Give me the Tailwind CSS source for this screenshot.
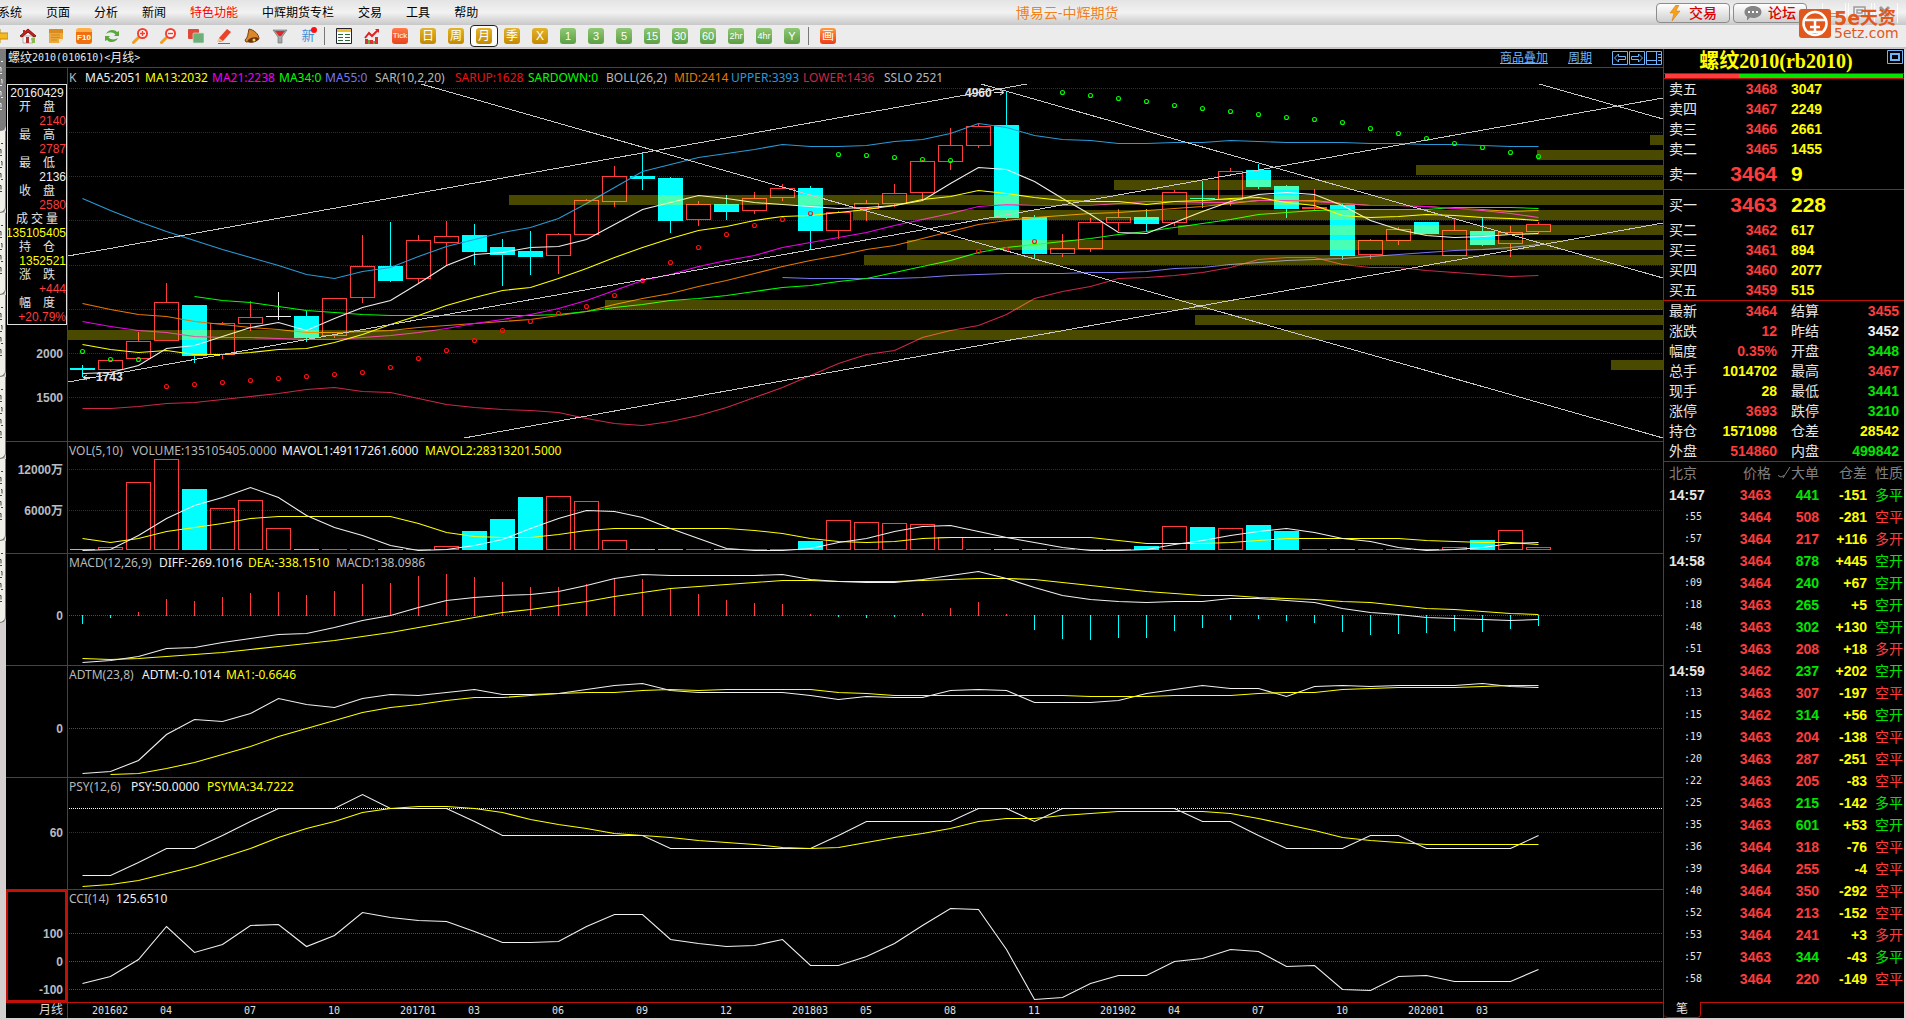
<!DOCTYPE html>
<html lang="zh-CN">
<head>
<meta charset="utf-8">
<title>博易云-中辉期货</title>
<script src="https://cdn.jsdelivr.net/npm/@tailwindcss/browser@4"></script>
</head>
<body class="h-screen min-h-[700px] flex flex-col overflow-hidden bg-[#d4d0cf] font-['Liberation_Sans','Noto_Sans_CJK_SC',sans-serif] text-xs">

<header class="relative shrink-0">
  <div class="h-[25px] flex items-center bg-linear-to-b from-[#e4e4e4] via-[#f2f2f2] to-[#c8c8c8] pr-2">
    <nav class="flex gap-6 -ml-0.5 text-black leading-6 whitespace-nowrap">
      <a href="#">系统</a><a href="#">页面</a><a href="#">分析</a><a href="#">新闻</a><a href="#" class="text-[#ff0000]">特色功能</a><a href="#">中辉期货专栏</a><a href="#">交易</a><a href="#">工具</a><a href="#">帮助</a>
    </nav>
    <h1 class="mx-auto text-sm text-[#f08020] whitespace-nowrap">博易云-中辉期货</h1>
    <div class="flex items-center gap-[3px]">
      <button class="w-[74px] h-5 rounded border border-[#8c8c8c] bg-linear-to-b from-white to-[#cfcfcf] flex items-center justify-center gap-2 text-sm font-medium text-[#d80000]">
        <svg width="12" height="16" viewBox="0 0 12 16"><path d="M7 0 1 8h4l-2 8 8-10H7l3-6z" fill="#f7a21b" stroke="#d07000" stroke-width=".5"/></svg>交易
      </button>
      <button class="w-[74px] h-5 rounded border border-[#8c8c8c] bg-linear-to-b from-white to-[#cfcfcf] flex items-center justify-center gap-1.5 text-sm font-medium text-[#d80000]">
        <svg width="18" height="16" viewBox="0 0 18 16"><path d="M9 1c5 0 8.500 2.500 8.500 6S14 13 9 13c-1 0-2-.1-3-.4L3 15.500V11.500C1.500 10.500.5 9 .5 7.200.5 3.500 4 1 9 1z" fill="#858585"/><path d="M4 7h2M8 7h2M12 7h2" stroke="#fff" stroke-width="1.800"/></svg>论坛
      </button>
      <div class="flex gap-0.5 ml-3 text-[#9a9a9a]">
        <button aria-label="最小化" class="w-6 h-5 border-x border-white/80"><svg width="20" height="16" viewBox="0 0 20 16" fill="none" stroke="currentColor"><path d="M5 8.500h10v3H5z"/></svg></button>
        <button aria-label="还原" class="w-6 h-5 border-x border-white/80"><svg width="20" height="16" viewBox="0 0 20 16" fill="none" stroke="currentColor" stroke-width="1.500"><path d="M5 2h11v9H5zM8 5h5v3H8z"/></svg></button>
        <button aria-label="关闭" class="w-6 h-5 border-x border-white/80"><svg width="20" height="16" viewBox="0 0 20 16" fill="none" stroke="currentColor" stroke-width="3"><path d="m5 2 9 9M14 2l-9 9"/></svg></button>
      </div>
    </div>
  </div>
  <div id="tools" class="h-[22px] flex items-center bg-[#ececec] overflow-hidden"></div>
  <div class="h-0.5 bg-[#c9c5c4]"></div>

  <div class="absolute right-1 top-2 flex items-center gap-[3px] text-[#e2571b]">
    <svg width="32" height="31" viewBox="0 0 32 31"><rect y="1" width="32" height="29" rx="3" fill="#e2571b"/><circle cx="16" cy="15.500" r="11.500" fill="none" stroke="#fff" stroke-width="2.500"/><path d="M6 12h20M11 19h10M8 24h16M16 12v12" stroke="#fff" stroke-width="2.500" fill="none"/></svg>
    <div class="w-[68px] leading-none">
      <div class="text-[19px] leading-[18px] font-bold font-['DejaVu_Sans','Noto_Sans_CJK_SC',sans-serif] whitespace-nowrap flex items-center">5e<span class="text-[18px]">天资</span></div>
      <div class="text-sm leading-3 font-['DejaVu_Sans',sans-serif] whitespace-nowrap">5etz.com</div>
    </div>
  </div>
</header>

<main class="flex-1 min-h-0 flex pr-0.5 pb-0.5">
  <aside class="w-1.5 shrink-0 flex flex-col" id="tabs" aria-hidden="true"></aside>

  <section class="flex-1 min-w-0 flex flex-col bg-black">
    <div class="h-[19px] shrink-0 flex items-center border-b border-[#c01008] text-[#e8e8e8] whitespace-nowrap pl-0.5">
      <h2 class="flex items-center leading-[18px]">螺纹<span class="font-['DejaVu_Sans_Mono',monospace] text-[10px]">2010(010610)&lt;</span>月线<span class="font-['DejaVu_Sans_Mono',monospace] text-[10px]">&gt;</span></h2>
      <div class="ml-auto flex items-center text-[#6fb4f8] pr-px">
        <a href="#" class="underline mr-5">商品叠加</a><a href="#" class="underline mr-5">周期</a>
        <div class="flex gap-px">
          <button aria-label="左移"><svg width="16" height="14" viewBox="0 0 16 14" fill="none" stroke="#6fb4f8"><path d="M.5.500h15v13H.5zM2.500 7l4-4v2.500h7v3h-7V11z"/></svg></button>
          <button aria-label="右移"><svg width="16" height="14" viewBox="0 0 16 14" fill="none" stroke="#6fb4f8"><path d="M.5.500h15v13H.5zM13.500 7l-4-4v2.500h-7v3h7V11z"/></svg></button>
          <button aria-label="布局"><svg width="16" height="14" viewBox="0 0 16 14" fill="none" stroke="#6fb4f8"><path d="M.5.500h15v13H.5zM.5 9.500h10M10.500.500v13M12 3.500h3M12 6.500h3M12 9.500h3"/></svg></button>
        </div>
      </div>
    </div>
    <div id="panels" class="flex-1 min-h-0 flex flex-col"></div>
    <div class="h-[15px] shrink-0 flex">
      <div class="w-[62px] shrink-0 border-r border-[#c01008] text-right pr-1 leading-[15px] text-[#d8d8d8]">月线</div>
      <div id="dates" class="relative flex-1 font-['DejaVu_Sans_Mono',monospace] text-[10px] leading-[15px] text-[#e0e0e0]"></div>
    </div>
  </section>

  <section class="w-[241px] shrink-0 bg-black border-l border-[#c01008] flex flex-col text-sm text-[#e6e6e6] overflow-hidden">
    <div class="h-6 shrink-0 flex items-center justify-center relative">
      <h2 class="font-['Liberation_Serif','Noto_Sans_CJK_SC',serif] text-[20px] leading-6 font-bold text-[#ffff00] pr-4">螺纹2010(rb2010)</h2>
      <button aria-label="窗口" class="absolute right-0 top-px"><svg width="17" height="15" viewBox="0 0 17 15" fill="none" stroke="#6fb4f8"><path d="M.5.500h15v13H.5z"/><path d="M4 4h8v6H4z" stroke-width="2"/></svg></button>
    </div>
    <div class="h-1.5 shrink-0 border-y border-[#c01008] flex px-px"><div class="w-[31%] bg-[#ff3c3c]"></div><div class="flex-1 bg-[#00e600]"></div></div>
    <table class="w-full table-fixed border-collapse shrink-0"><colgroup><col class="w-[50px]"><col class="w-[63px]"><col></colgroup><tbody id="ask"></tbody></table>
    <table class="w-full table-fixed border-collapse border-y border-[#c01008] shrink-0"><colgroup><col class="w-[50px]"><col class="w-[63px]"><col></colgroup><tbody id="bid"></tbody></table>
    <table class="w-full table-fixed border-collapse border-b border-[#c01008] shrink-0"><colgroup><col class="w-[38px]"><col class="w-[75px]"><col class="w-[47px]"><col></colgroup><tbody id="stats"></tbody></table>
    <table class="w-full table-fixed border-collapse">
      <colgroup><col class="w-[41px]"><col class="w-[66px]"><col class="w-12"><col class="w-12"><col></colgroup>
      <thead><tr class="h-[22px] text-[#808080] leading-5 whitespace-nowrap"><th class="p-0 pl-[5px] text-left font-normal">北京</th><th class="p-0 text-right font-normal">价格</th><th class="p-0 font-normal"><div class="flex justify-end items-center"><svg width="13" height="14" viewBox="0 0 13 14" fill="none" stroke="#808080"><path d="M0 9.500 3 11l3-1.500M5 12 12 1"/></svg>大单</div></th><th class="p-0 text-right font-normal">仓差</th><th class="p-0 pl-2 text-left font-normal">性质</th></tr></thead>
      <tbody id="ticks"></tbody>
    </table>
    <div class="mt-auto h-4 shrink-0 flex">
      <button class="w-[37px] border-r border-b border-[#c01008] rounded-b-sm text-xs leading-[15px]">笔</button>
      <div class="flex-1 border-t border-[#c01008]"></div>
    </div>
  </section>
</main>

<script>
const R='#ff3c3c', C='#00ffff', W='#f0f0f0', Y='#ffff00', G='#00ff00';
const $=id=>document.getElementById(id);
const X=i=>82+28*i;

/* ---------- toolbar ---------- */
const tile=(t,a,b,fs)=>`<span class="size-4 rounded-[3px] flex items-center justify-center text-white leading-none whitespace-nowrap ${fs}" style="background:linear-gradient(${a},${b})">${t}</span>`;
const svg=s=>`<svg width="16" height="16" viewBox="0 0 16 16">${s}</svg>`;
const gold=t=>tile(t,'#e3b32c','#c48a00','text-[12px]');
const green=(t,fs='text-[11px]')=>tile(t,'#8fc873','#5c9f45',fs);
const tools=[
 ['后退',svg('<path d="M0 8 8 1v4h8v6H8v4z" fill="#f5b820" stroke="#c88a00"/>')],
 ['主页',svg('<path d="M3 8h10v7H3z" fill="#f4f4f4" stroke="#888" stroke-width=".6"/><path d="M6 9h3v6H6z" fill="#a33"/><path d="m0 8 8-7 8 7-2 1-6-5-6 5z" fill="#c42020" stroke="#8a1010" stroke-width="1"/><path d="M3 2h2v3H3z" fill="#b22"/><path d="M11 10h4v5h-3z" fill="#8cba50"/>')],
 ['便签',svg('<path d="M1 1h14v10l-4 4H1z" fill="#eda83a"/><path d="M1 1h14v4H1z" fill="#d98b1d"/><path d="M3 7h9M3 9.500h9M3 12h6" stroke="#c98020" stroke-width=".8"/><path d="M15 11h-4v4z" fill="#fbe3a8"/>')],
 ['F10',`<span class="size-4 rounded-[3px] border-t-4 border-[#ffb04a] bg-[#f07010] text-white text-[8px] leading-3 font-bold flex items-center justify-center">F10</span>`],
 ['刷新',svg('<path d="M2 6c2-5 9-5 11-2l2-1v5h-5l1.500-1.500C9 4 5 4 2 6z" fill="#58a83c"/><path d="M14 10c-2 5-9 5-11 2l-2 1V8h5L4.500 9.500C7 12 11 12 14 10z" fill="#58a83c"/>')],
 ['放大',svg('<path d="m1.500 14.500 5-5" stroke="#f0a020" stroke-width="3" stroke-linecap="round"/><circle cx="10.500" cy="5.500" r="4.500" fill="#fff" stroke="#f04030" stroke-width="2"/><path d="M8 5.500h5M10.500 3v5" stroke="#f04030" stroke-width="1.500"/>')],
 ['缩小',svg('<path d="m1.500 14.500 5-5" stroke="#f0a020" stroke-width="3" stroke-linecap="round"/><circle cx="10.500" cy="5.500" r="4.500" fill="#fff" stroke="#f04030" stroke-width="2"/><path d="M8 5.500h5" stroke="#f04030" stroke-width="1.500"/>')],
 ['叠加',svg('<rect width="11" height="10" y="1" rx="1" fill="#e04838"/><rect x="5" y="5" width="11" height="10" rx="1" fill="#6eb07a" stroke="#cfe6cf" stroke-width=".7"/>')],
 ['画线',svg('<path d="m3 10 8-9 4 3-8 9-4 1z" fill="#e8432c"/><path d="m3 10-2 4 6-1z" fill="#f4c28a"/><path d="M2 15.500h12" stroke="#b05050"/>')],
 ['预警',svg('<path d="M5 1c5 1 10 5 10 10l-4 2-9 1-1-2c3-2 3-7 4-11z" fill="#d9882a" stroke="#7a3c0c"/><ellipse cx="9" cy="12" rx="5.500" ry="2.500" fill="#6e3208" transform="rotate(-14 9 12)"/><circle cx="10" cy="12" r="1.500" fill="#f8d060"/>')],
 ['筛选',svg('<path d="M1 2h14L10 9v6H6V9z" fill="#a8a8a8" stroke="#666" stroke-width=".6"/><path d="M3 3h10L9 8H7z" fill="#e02828"/>')],
 ['新',`<span class="relative text-[13px] leading-4 text-[#3f8fd8]">新<i class="absolute -top-px -right-0.5 size-[6px] rounded-full bg-[#ff1010]"></i></span>`],
 0,
 ['报价',svg('<path d="M.5.500h15v15H.5z" fill="#fff" stroke="#223"/><path d="M1 1h14v3H1z" fill="#f0c030"/><path d="M2 6.500h5M2 9.500h5M2 12.500h5M9 6.500h5M9 9.500h5M9 12.500h5" stroke="#2a6a3a"/>')],
 ['分时',svg('<path d="M1 11h3v5H1zM6 12h3v4H6zM11 9h3v7h-3z" fill="#e03030"/><path d="M4 12h2v4H4zM9 13h2v3H9z" fill="#5fae3f"/><path d="m1 10 4-5 3 3 6-6" fill="none" stroke="#e02020" stroke-width="2"/><path d="M11 1h4v4z" fill="#e02020"/>')],
 ['Tick',tile('Tick','#ff7a4a','#e8441c','text-[8px]')],
 ['日线',gold('日')],['周线',gold('周')],['月线',gold('月'),1],['季线',gold('季')],['X',gold('X')],
 ['1分',green('1')],['3分',green('3')],['5分',green('5')],['15分',green('15')],['30分',green('30')],['60分',green('60')],['2小时',green('2hr','text-[9px]')],['4小时',green('4hr','text-[9px]')],['年线',green('Y')],
 0,
 ['画',tile('画','#ff9a3c','#ee3a1a','text-[12px]')]];
$('tools').innerHTML=`<div class="flex items-center -ml-3.5">`+tools.map(t=>t===0
 ?'<span class="w-2 h-[18px] shrink-0"><i class="block w-px h-full bg-[#777] ml-0.5"></i></span>'
 :`<button aria-label="${t[0]}" class="w-7 h-[22px] shrink-0 flex items-center justify-center ${t[2]?'rounded border border-[#222] bg-white':''}">${t[1]}</button>`).join('')+'</div>';

/* ---------- side tabs ---------- */
let th='';
for(let k=0;k<7;k++){
  let d='';for(let n=0;n<9;n++)d+=`M${n%3?0:1} ${12.5+n*6}h${2-(n%2)}${n%2?'v4':''}`;
  th+=`<div class="h-[82px] shrink-0 border-b border-r border-[#777] rounded-br-md ${k?'bg-[#f0efe8]':'bg-[#7c7c7c]'}"><svg width="4" height="80" viewBox="0 0 4 80" fill="none" stroke="${k?'#444':'#eee'}"><path d="${d}"/></svg></div>`;
}
$('tabs').innerHTML=th;

/* ---------- chart data (units of each plot's view box) ---------- */
// body top, body bottom, high, low, kind
const K=[[368,370,365,377,C],[360,370,360,371,R],[341,359,332,359,R],[302,341,283,341,R],[305,356,305,363,C],[323,355,322,359,R],[317,324,301,331,R],[316,317,292,320,W],[316,338,311,342,C],[298,336,298,338,R],[266,298,235,303,R],[266,281,222,282,C],[240,279,235,284,R],[236,243,221,265,R],[235,252,224,265,C],[247,255,239,286,C],[251,257,231,275,C],[234,256,233,274,R],[200,235,199,235,R],[176,202,166,207,R],[176,179,153,190,C],[178,221,177,233,C],[204,220,201,226,R],[204,212,195,220,C],[198,211,192,214,R],[188,198,184,201,R],[188,231,186,250,C],[212,231,211,239,R],[203,209,200,221,R],[193,204,184,207,R],[161,193,160,201,R],[145,162,128,170,R],[126,146,124,148,R],[125,218,92,219,C],[217,254,215,259,C],[248,254,234,257,R],[222,249,218,252,R],[217,223,209,231,R],[217,224,209,232,C],[192,223,190,226,R],[198,199,181,208,C],[171,200,168,206,R],[170,187,164,189,C],[186,209,185,218,C],[207,209,189,210,R],[205,256,203,260,C],[240,255,239,259,R],[229,241,227,245,R],[222,234,222,234,C],[230,256,218,256,R],[231,245,218,246,C],[232,244,226,257,R],[224,232,222,233,R]];
const upper=[198,210,221,231,240,249,257,265,274,278,271,267,256,246,239,232,227,218,203,187,171,164,157,153,149,144,146,146,145,141,139,133,123,127,135,139,140,143,143,142,142,140,141,142,142,142,143,143,144,144,145,146,146];
const ma5=[373,372,365,348,345,336,327,322,330,318,307,300,283,265,254,252,247,246,239,224,209,202,195,198,202,204,206,208,207,205,200,183,167,169,181,198,214,232,233,222,211,201,194,192,194,205,220,229,235,237,236,234,233];
const ma13=[344,349,352,350,354,354,352,349,348,342,334,324,315,305,297,290,287,278,268,257,247,238,230,226,220,216,215,212,209,205,199,196,190,193,197,200,201,201,204,201,200,198,197,202,205,215,217,216,214,215,217,218,220];
const ma21=[321,326,330,332,336,337,337,338,339,339,337,335,332,328,323,319,314,308,300,290,280,274,266,260,255,247,242,237,232,225,219,213,206,204,205,205,205,203,201,201,202,202,200,200,201,203,205,205,206,208,210,213,217];
const ma34=[,,,,296,300,302,306,310,312,314,315,315,315,315,315,315,314,311,307,304,300,298,295,291,287,285,281,278,272,266,260,252,247,244,241,238,234,231,227,223,219,214,212,210,209,209,209,209,207,207,207,208];
const mid=[303,309,314,316,321,324,327,329,332,332,331,330,327,325,323,321,319,315,311,304,298,293,286,280,273,266,260,255,249,245,238,231,224,220,217,215,213,212,210,208,206,203,200,200,200,203,205,205,206,208,209,211,210];
const ma55=Array(25).concat([277,278,278,278,278,277,275,274,273,273,273,272,272,271,268,267,264,262,260,259,258,256,254,252,250,249,247,244]);
const lower=[408,408,406,403,402,399,396,393,389,387,391,392,398,404,407,409,410,412,418,423,425,421,415,407,397,387,375,363,354,350,337,330,325,314,298,291,286,278,277,275,272,267,259,257,257,264,267,267,270,272,274,276,275];
const sarG={0:351,1:359,2:359,27:154,28:155,29:157,30:159,31:160,35:92,36:95,37:98,38:101,39:105,40:108,41:111,42:114,43:117,44:119,45:122,46:128,47:133,48:138,49:143,50:147,51:152,52:156};
const sarR={3:386,4:384,5:382,6:380,7:378,8:376,9:374,10:372,11:367,12:358,13:350,14:340,15:330,16:321,17:313,18:306,19:295,20:280,21:262,22:247,23:234,24:225,25:219,26:213,32:251,33:249,34:241};
const profile=[[1650,135],[1537,150],[1416,165],[1114,180],[509,195],[853,210],[1178,225],[907,240],[864,255],[605,300],[1195,315],[68,330],[1611,360]];
const trends=[[68,256,1027,84],[421,84,1663,438],[981,84,1663,278],[1539,84,1663,119],[68,382,1663,98],[464,438,1663,223]];
const vol=[[549,C],[547,R],[482,R],[459,R],[489,C],[508,R],[500,R],[528,R],[549,C],[549,R],[549,R],[549,C],[549,R],[546,R],[531,C],[519,C],[497,C],[496,R],[501,R],[540,R],[549,C],[549,C],[549,R],[549,C],[549,R],[549,R],[541,C],[520,R],[522,R],[523,R],[524,R],[537,R],[549,R],[549,C],[549,C],[549,R],[549,R],[549,R],[546,C],[526,R],[527,C],[528,R],[525,C],[531,C],[549,R],[549,C],[549,R],[549,R],[549,C],[547,R],[540,C],[530,R],[547,R]];
const mv1=[550,549,535,518,505,497,487,497,515,527,535,545,550,549,545,539,528,518,510,511,517,528,538,548,550,550,548,542,538,531,526,525,531,537,542,547,550,550,549,544,540,535,531,528,532,538,541,547,550,549,547,543,542];
const mv2=[538,542,538,531,527,523,518,516,516,516,516,516,523,532,536,537,537,534,530,528,528,528,528,528,530,533,538,541,542,541,538,537,537,537,537,537,537,540,543,543,543,542,540,538,538,538,538,538,540,541,542,542,544];
const macd=[624,618,612,599,601,597,593,592,595,591,584,583,576,574,577,582,587,587,584,579,579,589,594,600,603,604,614,617,618,617,613,608,602,614,630,639,640,638,638,631,628,620,619,621,623,632,635,634,633,631,632,629,626];
const diff=[662,660,656,648,647,642,638,634,633,627,620,615,607,600,597,595,594,591,585,578,574,575,575,575,575,574,579,581,582,582,579,575,571,578,587,595,599,601,602,601,601,598,598,600,602,608,612,614,617,618,619,620,619];
const dea=[658,659,658,656,654,652,649,646,643,640,636,632,627,622,617,612,609,605,601,596,592,588,586,584,582,580,580,581,581,581,580,579,578,578,579,582,585,588,591,593,595,595,597,598,599,601,602,605,608,609,611,613,614];
const adtm=[773,771,760,734,719,721,713,698,704,707,698,694,695,692,689,694,694,693,689,685,683,690,692,692,692,692,695,699,696,697,697,690,689,690,702,702,702,700,693,689,685,688,688,696,686,685,686,685,685,685,683,686,687];
const adma=[,774,773,768,762,754,746,736,728,720,712,707,704,700,697,697,695,693,692,692,690,689,690,689,689,689,689,692,693,695,695,695,695,695,695,695,696,696,696,695,695,695,693,692,692,689,688,687,687,687,686,685,685];
const psy=[875,875,862,848,848,835,821,808,808,808,794,808,808,808,821,835,835,835,835,835,835,848,848,848,848,848,848,835,821,821,821,821,808,808,821,808,808,808,808,808,821,821,835,848,848,848,835,835,848,848,848,848,835];
const psyma=[886,884,880,873,866,857,848,837,828,821,812,808,806,806,808,812,819,824,828,833,835,837,840,842,844,847,848,847,842,837,833,828,821,818,818,815,813,811,811,811,811,813,818,824,830,837,840,842,844,844,844,844,844];
const cci=[983,976,959,926,952,944,925,924,946,935,912,917,920,921,931,942,942,941,926,914,914,939,943,946,945,939,965,965,956,943,925,908,909,949,999,997,983,975,975,961,958,949,951,966,965,989,990,976,975,981,981,981,969];

/* ---------- drawing helpers ---------- */
const line=(a,c)=>`<polyline fill="none" stroke="${c}" stroke-width="1.1" vector-effect="non-scaling-stroke" points="${a.map((y,i)=>`${X(i)+.5},${y+.5}`).filter(Boolean).join(' ')}"/>`;
const grid=(ys,c)=>ys.map(y=>`<path d="M69 ${y+.5}H1663" stroke="${c}" stroke-dasharray="1 1" shape-rendering="crispEdges"/>`).join('');
const box=(i,t,b,c)=>c===R&&b-t>2?`<rect x="${X(i)-11.5}" y="${t+.5}" width="24" height="${b-t-1}" fill="none" stroke="${c}"/>`:`<rect x="${X(i)-12}" y="${t}" width="25" height="${Math.max(1,b-t)}" fill="${c}"/>`;
const seg=(i,a,b,c)=>b>a?`<path d="M${X(i)+.5} ${a}V${b}" stroke="${c}"/>`:'';
const ring=(o,c)=>Object.entries(o).map(([i,y])=>`<circle cx="${X(+i)+.5}" cy="${y+.5}" r="2" fill="none" stroke="${c}" stroke-width="1.1"/>`).join('');
const crisp=s=>`<g shape-rendering="crispEdges">${s}</g>`;

const kSvg=grid([88,132,176,220,265,309,353,397],'#a00000')
 +crisp(K.map(([t,b,h,l,c],i)=>(c===R?seg(i,h,t,c)+seg(i,b,l,c):seg(i,h,l,c))+box(i,t,b,c)).join(''))
 +line(upper,'#2a9ad6')+line(lower,'#cc2848')+line(mid,'#e87800')+line(ma55,'#7878f0')+line(ma34,G)+line(ma21,'#f000f0')+line(ma13,Y)+line(ma5,W)
 +crisp(profile.map(([x,y])=>`<rect x="${x}" y="${y}" width="${1663-x}" height="10" fill="#ffff00" fill-opacity=".285"/>`).join(''))
 +ring(sarG,G)+ring(sarR,'#ff1010')
 +crisp(trends.map(([a,b,c,d])=>`<path d="M${a} ${b}L${c} ${d}" stroke="#c8c8c8"/>`).join(''))
 +'<path d="M83 377.500h12M87 375l-4 2.500 4 2.500M994 92.500h9M1000 90l4 2.500-4 2.500" stroke="#e0e0e0" fill="none"/>';
const vSvg=grid([469,510],'#a00000')+crisp(vol.map(([t,c],i)=>box(i,t,550,c)).join(''))+line(mv2,Y)+line(mv1,W);
const mSvg=grid([615],'#d01818')+crisp(macd.map((y,i)=>y<615?seg(i,y,616,R):seg(i,615,y,C)).join(''))+line(dea,Y)+line(diff,W);
const aSvg=grid([728],'#d01818')+line(adtm,W)+line(adma,Y);
const pSvg=grid([832],'#a00000')+grid([808],'#ffffff')+line(psy,W)+line(psyma,Y);
const cSvg=grid([933,961,989],'#d01818')+line(cci,W);

const gray='#b8b8b8';
// flex grow leaves out the 1px bottom border, which is added on top of it
const panels=[
 {y:68,h:374,flex:'flex-[373_1_0%]',svg:kSvg,axis:[['2000',353],['1500',397]],legend:[['K',gray,16],['MA5:2051',W,60],['MA13:2032',Y,67],['MA21:2238','#f000f0',67],['MA34:0',G,46],['MA55:0','#7878f0',50],['SAR(10,2,20)',gray,80],['SARUP:1628','#f01010',73],['SARDOWN:0',G,78],['BOLL(26,2)',gray,68],['MID:2414','#e87800',57],['UPPER:3393','#2a9ad6',72],['LOWER:1436','#cc2848',81],['SSLO 2521',gray,70]]},
 {y:442,h:112,flex:'flex-[111_1_0%]',svg:vSvg,axis:[['12000万',469],['6000万',510]],legend:[['VOL(5,10)',gray,63],['VOLUME:135105405.0000',gray,150],['MAVOL1:49117261.6000',W,143],['MAVOL2:28313201.5000',Y,150]]},
 {y:554,h:112,flex:'flex-[111_1_0%]',svg:mSvg,axis:[['0',615]],legend:[['MACD(12,26,9)',gray,90],['DIFF:-269.1016',W,89],['DEA:-338.1510',Y,88],['MACD:138.0986',gray,100]]},
 {y:666,h:112,flex:'flex-[111_1_0%]',svg:aSvg,axis:[['0',728]],legend:[['ADTM(23,8)',gray,73],['ADTM:-0.1014',W,84],['MA1:-0.6646',Y,90]]},
 {y:778,h:112,flex:'flex-[111_1_0%]',svg:pSvg,axis:[['60',832]],legend:[['PSY(12,6)',gray,62],['PSY:50.0000',W,76],['PSYMA:34.7222',Y,100]]},
 {y:890,h:113,flex:'flex-[112_1_0%]',svg:cSvg,axis:[['100',933],['0',961],['-100',989]],legend:[['CCI(14)',gray,47],['125.6510',W,60]]}];

const info=[['开','盘','2140',R],['最','高','2787',R],['最','低','2136',W],['收','盘','2580',R],['成交','量','135105405',Y],['持','仓','1352521',Y],['涨','跌','+444',R],['幅','度','+20.79%',R]];
const infoBox=`<div class="absolute left-px right-0 top-4 z-10 pt-px bg-black border border-[#e0e0e0] overflow-hidden text-right leading-[14px]"><div class="text-center text-[#f0f0f0]">20160429</div>`
 +info.map(([a,b,v,c])=>`<div class="flex justify-center text-[#e0e0e0] ${a.length>1?'gap-[3px]':'gap-3'}">${[...a+b].map(x=>`<span>${x}</span>`).join('')}</div><div class="flex justify-end" style="color:${c}">${v}</div>`).join('')+'</div>';

$('panels').innerHTML=panels.map((p,n)=>`
<div class="${p.flex} min-h-0 flex border-b border-[#c01008]">
  <div class="relative w-[62px] shrink-0 border-r border-[#c01008] font-bold text-[#b8bcc0]">
    ${n===5?'<div class="absolute inset-0 border-2 border-[#c01008]"></div>':''}
    ${p.axis.map(([t,y])=>`<span class="absolute right-1 -translate-y-1/2 leading-4" style="top:${(y-p.y+.5)/(p.h-1)*100}%">${t}</span>`).join('')}
    ${n===0?`<div class="font-normal">${infoBox}</div>`:''}
  </div>
  <div class="relative flex-1 min-w-0 overflow-hidden">
    <svg class="absolute inset-0 size-full" viewBox="68 ${p.y} 1595 ${p.h-1}" preserveAspectRatio="none">${p.svg}</svg>
    <div class="relative flex pl-px ${n===0?'pt-px':''} font-['Noto_Sans',sans-serif] leading-[18px] whitespace-nowrap">${p.legend.map(([t,c,w])=>`<span class="shrink-0" style="color:${c};width:${w}px">${t}</span>`).join('')}</div>
    ${n===0?`<span class="absolute -translate-y-1/2 font-bold text-[#e4e4e4]" style="left:${(965-68)/15.95}%;top:${(93-68)/3.73}%">4960</span><span class="absolute -translate-y-1/2 font-bold text-[#e4e4e4]" style="left:${(96-68)/15.95}%;top:${(377-68)/3.73}%">1743</span>`:''}
  </div>
</div>`).join('');

$('dates').innerHTML=[[1,'201602'],[3,'04'],[6,'07'],[9,'10'],[12,'201701'],[14,'03'],[17,'06'],[20,'09'],[23,'12'],[26,'201803'],[28,'05'],[31,'08'],[34,'11'],[37,'201902'],[39,'04'],[42,'07'],[45,'10'],[48,'202001'],[50,'03']]
 .map(([i,t])=>`<span class="absolute top-0 -translate-x-1/2" style="left:${(X(i)-68)/15.95}%">${t}</span>`).join('');

/* ---------- quote panel ---------- */
const depth=(rows,big,bigH)=>rows.map(([n,p,v],k)=>`<tr class="${k===big?bigH:'h-5'} leading-5"><th class="p-0 pl-[5px] font-normal text-left whitespace-nowrap">${n}</th><td class="p-0 text-right font-bold text-[#ff3c3c] ${k===big?'text-[21px]':''}"><div class="flex justify-end">${p}</div></td><td class="p-0 pl-3.5 font-bold text-[#ffff00] ${k===big?'text-[21px]':''}">${v}</td></tr>`).join('');
$('ask').innerHTML=depth([['卖五',3468,3047],['卖四',3467,2249],['卖三',3466,2661],['卖二',3465,1455],['卖一',3464,9]],4,'h-[30px]');
$('bid').innerHTML=depth([['买一',3463,228],['买二',3462,617],['买三',3461,894],['买四',3460,2077],['买五',3459,515]],0,'h-[30px]');
const g='#00e600';
$('stats').innerHTML=[['最新','3464',R,'结算','3455',R],['涨跌','12',R,'昨结','3452',W],['幅度','0.35%',R,'开盘','3448',g],['总手','1014702',Y,'最高','3467',R],['现手','28',Y,'最低','3441',g],['涨停','3693',R,'跌停','3210',g],['持仓','1571098',Y,'仓差','28542',Y],['外盘','514860',R,'内盘','499842',g]]
 .map(([a,b,c,d,e,f])=>`<tr class="h-5 leading-5 whitespace-nowrap"><th class="p-0 pl-[5px] font-normal text-left">${a}</th><td class="p-0 text-right font-bold" style="color:${c}">${b}</td><th class="p-0 pl-3.5 font-normal text-left">${d}</th><td class="p-0 pr-[5px] text-right font-bold" style="color:${f}">${e}</td></tr>`).join('');
$('ticks').innerHTML=`14:57 3463 441 -151 多平 g|:55 3464 508 -281 空平 r|:57 3464 217 +116 多开 r|14:58 3464 878 +445 空开 g|:09 3464 240 +67 空开 g|:18 3463 265 +5 空开 g|:48 3463 302 +130 空开 g|:51 3463 208 +18 多开 r|14:59 3462 237 +202 空开 g|:13 3463 307 -197 空平 r|:15 3462 314 +56 空开 g|:19 3463 204 -138 空平 r|:20 3463 287 -251 空平 r|:22 3463 205 -83 空平 r|:25 3463 215 -142 多平 g|:35 3463 601 +53 空开 g|:36 3464 318 -76 空平 r|:39 3464 255 -4 空平 r|:40 3464 350 -292 空平 r|:52 3464 213 -152 空平 r|:53 3464 241 +3 多开 r|:57 3463 344 -43 多平 g|:58 3464 220 -149 空平 r`.split('|').map(s=>{
 const [t,p,v,d,n,k]=s.split(' '),c=k==='g'?g:R;
 return `<tr class="h-[22px] leading-5 whitespace-nowrap"><td class="p-0 ${t.length>3?'pl-[5px] font-bold':"pr-[3px] text-right text-[10px] font-['DejaVu_Sans_Mono',monospace]"}">${t}</td><td class="p-0 text-right font-bold text-[#ff3c3c]">${p}</td><td class="p-0 text-right font-bold" style="color:${c}">${v}</td><td class="p-0 text-right font-bold text-[#ffff00]">${d}</td><td class="p-0 pl-2" style="color:${c}">${n}</td></tr>`}).join('');
</script>
</body>
</html>
